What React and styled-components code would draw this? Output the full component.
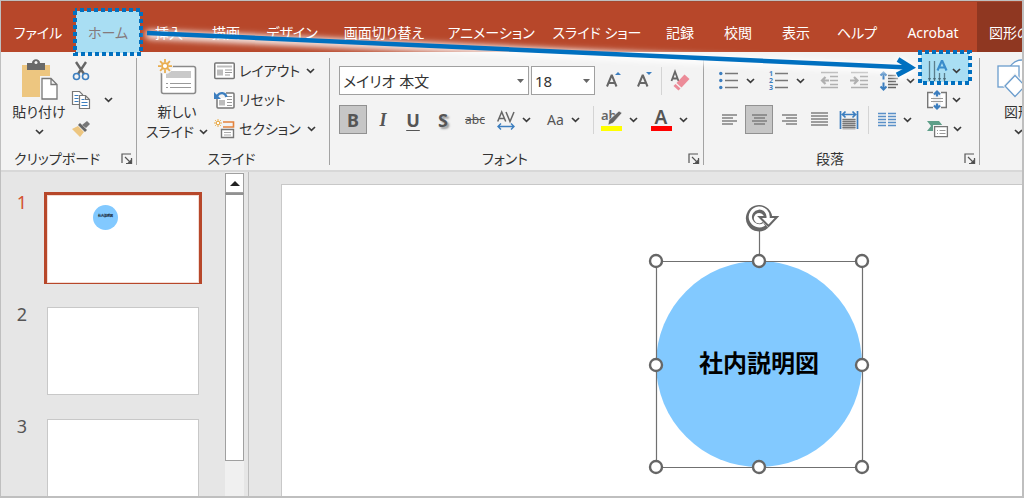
import React, { useState } from 'react';
import styled, { createGlobalStyle } from 'styled-components';

const GlobalStyle = createGlobalStyle`
  * {
    box-sizing: border-box;
  }
  body {
    margin: 0;
    font-family: 'Noto Sans', 'Noto Sans CJK JP', sans-serif;
    font-size: 14px;
    line-height: 20px;
    font-feature-settings: 'palt';
    color: #333;
  }
  button, select {
    font: inherit;
    font-feature-settings: inherit;
    color: inherit;
    border: 0;
    margin: 0;
    padding: 0;
    background: none;
  }
  svg {
    display: block;
    flex: none;
    overflow: visible;
  }
`;

/* ---------- frame ---------- */

const Frame = styled.div`
  position: relative;
  display: flex;
  flex-direction: column;
  height: 100vh;
  overflow: hidden;
  background: #e6e6e6;
  border: 1px solid #bfbfbf;
  border-right-width: 2px;
  border-bottom-width: 2px;
`;

const TabBar = styled.nav`
  display: flex;
  flex: none;
  height: 51px;
  background: #b7472a;
  border-top: 1px solid #a5482f;
`;

const Tab = styled.button`
  position: relative;
  flex: none;
  width: ${(p) => p.$width}px;
  padding-top: 12px;
  font-size: 14px;
  white-space: nowrap;
  color: ${(p) => (p.$active ? '#857a7c' : '#fff')};
`;

const ContextTab = styled.button`
  flex: 1 0 0;
  min-width: 0;
  padding: 12px 0 0 12px;
  overflow: hidden;
  font-size: 14px;
  text-align: left;
  white-space: nowrap;
  color: #fff;
  background: #8f3721;
`;

const TabText = styled.span`
  position: relative;
`;

const Marker = styled.svg`
  position: absolute;
  left: 50%;
  bottom: ${(p) => p.$bottom}px;
  transform: translateX(-50%);
`;

const ArrowLayer = styled.svg`
  position: absolute;
  top: 0;
  left: 0;
  pointer-events: none;
  filter: drop-shadow(0 2px 3px #fff) drop-shadow(0 0 3px rgba(255, 255, 255, 0.8));
`;

/* ---------- ribbon ---------- */

const Ribbon = styled.div`
  display: flex;
  flex: none;
  height: 120px;
  background: #f3f3f3;
  border-bottom: 2px solid #d8d8d8;
`;

const Group = styled.section`
  position: relative;
  display: flex;
  flex-direction: column;
  flex: ${(p) => (p.$width ? 'none' : '1 0 0')};
  width: ${(p) => (p.$width ? p.$width + 'px' : 'auto')};
  min-width: 0;

  &:not(:last-child)::after {
    content: '';
    position: absolute;
    top: 6px;
    right: 0;
    bottom: 5px;
    width: 1px;
    background: #a3a3a3;
  }
`;

const GroupBody = styled.div`
  display: flex;
  height: 96px;
  padding: 4px 0 0 ${(p) => p.$left || 8}px;
`;

const GroupFooter = styled.div`
  display: flex;
  align-items: center;
  height: 22px;
  padding-right: 4px;
`;

const GroupName = styled.span`
  flex: 1;
  padding-right: ${(p) => (p.$launcher ? 8 : 0)}px;
  text-align: center;
`;

const Launcher = styled.button`
  width: 12px;
  height: 12px;
`;

const BigButton = styled.button`
  display: flex;
  flex-direction: column;
  align-items: center;
  flex: none;
  width: 60px;
  padding-top: 2px;
  white-space: nowrap;

  & > svg {
    height: 44px;
  }
`;

const BigLine = styled.span`
  display: flex;
  align-items: center;
  justify-content: center;
  gap: 5px;
  height: 20px;
`;

const Stack = styled.div`
  display: flex;
  flex-direction: column;
  padding-left: ${(p) => p.$left || 0}px;
`;

const StackButton = styled.button`
  display: flex;
  align-items: center;
  gap: 4px;
  height: 29px;
  padding: 0 3px;
  white-space: nowrap;

  & > * + svg {
    margin-left: 2px;
  }
`;

const MenuButton = styled(StackButton)`
  position: relative;
  padding: 0 8px;
`;

const Over = styled.span`
  position: relative;
  display: flex;
  align-items: center;
  gap: 5px;
`;

const Rows = styled.div`
  display: flex;
  flex-direction: column;
  gap: 10px;
  padding-top: 10px;
  width: ${(p) => p.$width || 'auto'};
`;

const Row = styled.div`
  display: flex;
  align-items: center;
  gap: ${(p) => p.$gap || 2}px;
  height: 29px;
`;

const Tool = styled.button`
  display: flex;
  align-items: center;
  justify-content: center;
  flex: none;
  width: ${(p) => p.$width || 28}px;
  height: 29px;
  background: ${(p) => (p.$on ? '#c6c6c6' : 'transparent')};
  border: 1px solid ${(p) => (p.$on ? '#919191' : 'transparent')};
`;

const DropTool = styled.button`
  display: flex;
  align-items: center;
  gap: 7px;
  flex: none;
  width: ${(p) => p.$width || 48}px;
  height: 29px;
  padding-left: 4px;
`;

const Divider = styled.span`
  width: 1px;
  height: 28px;
  margin: 0 ${(p) => p.$space || 0}px;
  background: #d4d4d4;
`;

const Glyph = styled.span`
  font-size: 18px;
  font-weight: ${(p) => (p.$bold ? 700 : 400)};
  font-style: ${(p) => (p.$italic ? 'italic' : 'normal')};
  font-family: ${(p) => (p.$italic ? "'Liberation Serif', serif" : 'inherit')};
  text-decoration: ${(p) => (p.$underline ? 'underline' : 'none')};
  text-underline-offset: 3px;
  text-shadow: ${(p) => (p.$shadow ? '2px 2px 2px #999' : 'none')};
  color: #555;
`;

const SmallGlyph = styled.span`
  font-size: ${(p) => p.$size || 14}px;
  text-decoration: ${(p) => (p.$strike ? 'line-through' : 'none')};
  color: #555;
`;

const SelectBox = styled.span`
  position: relative;
  width: ${(p) => p.$width}px;
  height: 29px;

  select {
    width: 100%;
    height: 100%;
    padding: 0 20px 0 3px;
    font-size: 15px;
    appearance: none;
    background: #fff;
    border: 1px solid #a0a0a0;
  }
  svg {
    position: absolute;
    top: 13px;
    right: 5px;
    pointer-events: none;
  }
`;

/* ---------- workspace ---------- */

const Workspace = styled.div`
  display: flex;
  flex: 1;
  min-height: 0;
`;

const SlideList = styled.ol`
  display: flex;
  flex-direction: column;
  gap: 20px;
  flex: none;
  width: 224px;
  margin: 0;
  padding: 20px 0 0 13px;
  overflow: hidden;
  list-style: none;
`;

const SlideItem = styled.li`
  display: flex;
  align-items: flex-start;
  gap: 14px;
  flex: none;
`;

const SlideNumber = styled.span`
  width: 16px;
  font-size: 18px;
  text-align: center;
  color: ${(p) => (p.$current ? '#d35230' : '#555')};
`;

const Thumb = styled.button`
  position: relative;
  width: 158px;
  height: 92px;
  padding: ${(p) => (p.$current ? 0 : 3)}px;
  border: ${(p) => (p.$current ? '3px solid #b7472a' : '0')};

  &::before {
    content: '';
    display: block;
    height: 100%;
    background: #fff;
    border: 1px solid ${(p) => (p.$current ? '#f3dcd5' : '#c8c8c8')};
  }
`;

const ThumbShape = styled.span`
  position: absolute;
  top: 10px;
  left: 46px;
  width: 25px;
  height: 25px;
  border-radius: 50%;
  font-size: 3px;
  font-weight: 700;
  line-height: 22px;
  text-align: center;
  color: #000;
  background: #82c9ff;
`;

const ScrollBar = styled.div`
  display: flex;
  flex-direction: column;
  flex: none;
  width: 19px;
  padding-top: 1px;
  background: #f0f0f0;
`;

const ScrollUp = styled.button`
  display: flex;
  align-items: center;
  justify-content: center;
  height: 20px;
  background: #fff;
  border: 1px solid #a0a0a0;
`;

const ScrollThumb = styled.div`
  flex: 0 0 83%;
  background: #fff;
  border: 1px solid #a0a0a0;
  border-top: 2px solid #919191;
`;

const Stage = styled.main`
  flex: 1;
  display: flex;
  min-width: 0;
  margin-left: 4px;
  padding: 12px 0 0 32px;
  border-left: 1px solid #bdbdbd;
`;

const Slide = styled.div`
  position: relative;
  flex: 1;
  background: #fff;
  border: 1px solid #c8c8c8;
  border-right: 0;
  border-bottom: 0;
`;

const Shape = styled.div`
  position: absolute;
  top: 76px;
  left: 374px;
  display: flex;
  align-items: center;
  justify-content: center;
  width: 206px;
  height: 206px;
  padding-bottom: 4px;
  border-radius: 50%;
  font-size: 24px;
  font-weight: 700;
  font-family: 'Noto Sans CJK JP', sans-serif;
  font-feature-settings: normal;
  color: #000;
  background: #82c9ff;
`;

const Selection = styled.svg`
  position: absolute;
  top: -57px;
  left: -8px;
`;

/* ---------- icons ---------- */

const G = '#777';
const B = '#3c7ebf';

const Chevron = () => (
  <svg width="9" height="6" viewBox="0 0 9 6" fill="none" stroke="#3b3b3b" strokeWidth="1.7">
    <path d="M1 1l3.5 3.3L8 1" />
  </svg>
);

const Caret = () => (
  <svg width="7" height="4" viewBox="0 0 7 4">
    <path d="M0 0h7L3.500 4z" fill="#666" />
  </svg>
);

const LauncherIcon = () => (
  <svg width="12" height="12" viewBox="0 0 12 12" fill="none" stroke="#555" strokeWidth="1.2">
    <path d="M1 10V1h9M4 4l6 6M10.500 5v5.500H5" />
    <path d="M7 10.500h3.500V7z" fill="#444" />
  </svg>
);

const PasteIcon = () => (
  <svg width="38" height="44" viewBox="0 0 38 44">
    <rect x="2" y="7" width="28" height="32" fill="#edc680" />
    <path d="M7 5h5c0-5 8-5 8 0h5v7H7z" fill="#696969" />
    <circle cx="16" cy="4.500" r="1.500" fill="#f3f3f3" />
    <path d="M20 18h12l7 7v17H20z" fill="#f3f3f3" />
    <path d="M22 20.500h9l6 6V41H22zM31 20.500v6h6" fill="#fff" stroke={G} strokeWidth="1.3" />
  </svg>
);

const CutIcon = () => (
  <svg width="18" height="20" viewBox="0 0 18 20" fill="none">
    <path d="M4 1l8 12M14 1L6 13" stroke="#666" strokeWidth="2.400" />
    <circle cx="4.500" cy="15.500" r="3" stroke={B} strokeWidth="1.600" />
    <circle cx="13.500" cy="15.500" r="3" stroke={B} strokeWidth="1.600" />
  </svg>
);

const CopyIcon = () => (
  <svg width="18" height="20" viewBox="0 0 18 20" fill="#fff" stroke={G} strokeWidth="1.200">
    <path d="M.500 1.500h7l3 3v10h-10z" />
    <path d="M2.500 5.500h4M2.500 8.500h4M2.500 11.500h4" stroke={B} />
    <path d="M7.500 5.500h6l4 4v9h-10zM13.500 5.500v4h4" />
    <path d="M9.500 9.500h3M9.500 12.500h6M9.500 15.500h6" stroke={B} />
  </svg>
);

const BrushIcon = () => (
  <svg width="18" height="18" viewBox="0 0 18 18">
    <path d="M0 9l6-3 6 6-4 5z" fill="#edc680" />
    <path d="M6 5l2-2 7 7-2 2z" fill="#666" />
    <path d="M10 5l5-4 3 3-4 4z" fill="#777" />
  </svg>
);

const Spark = ({ x, y, r }) => (
  <g transform={`translate(${x} ${y}) scale(${r})`} stroke="#e9ad4e" strokeWidth="0.250" fill="none">
    <circle r="0.420" fill="#fff" />
    <path d="M0-.500V-1M0 .500V1M-.500 0H-1M.500 0H1M-.350-.350l-.350-.350M.350-.350l.350-.350M-.350 .350l-.350 .350M.350 .350l.350 .350" />
  </g>
);

const NewSlideIcon = () => (
  <svg width="40" height="44" viewBox="0 0 40 44">
    <rect x="4.500" y="8.500" width="34" height="27" rx="2" fill="#fff" stroke="#8a8a8a" strokeWidth="1.600" />
    <path d="M9 13h25v7H9z" fill="#c9c9c9" />
    <path d="M9 25.500h2M13 25.500h21M9 29.500h2M13 29.500h21" stroke="#999" />
    <circle cx="8" cy="8" r="8" fill="#f3f3f3" />
    <Spark x={8} y={8} r={7} />
  </svg>
);

const LayoutIcon = () => (
  <svg width="21" height="18" viewBox="0 0 21 18">
    <rect x=".750" y="1" width="19.500" height="15.500" rx="1" fill="#fff" stroke={G} strokeWidth="1.500" />
    <path d="M3 3.500h15v2H3zM3 7.500h6v6H3z" fill="#bdbdbd" />
    <path d="M11 8h7M11 10.500h7M11 13h5" stroke="#999" />
  </svg>
);

const ResetIcon = () => (
  <svg width="21" height="18" viewBox="0 0 21 18">
    <rect x="3" y="2" width="17" height="15" rx="1" fill="#fff" stroke={G} strokeWidth="1.500" />
    <path d="M5 9h6v5.500H5z" fill="#bdbdbd" />
    <path d="M13 5.500h5M13 8.500h5M13 11.500h5M13 14.500h5" stroke="#999" />
    <path d="M0 0h12v7H0z" fill="#f3f3f3" />
    <path d="M12.500 6C11 1 6 1 3 5" stroke={B} strokeWidth="2.400" fill="none" />
    <path d="M0 1v7h7z" fill={B} />
  </svg>
);

const SectionIcon = () => (
  <svg width="21" height="20" viewBox="0 0 21 20" fill="none">
    <path d="M9 3h10.500v5H9" stroke="#e3833d" strokeWidth="1.600" />
    <path d="M7.500 10.500h12v8h-12z" fill="#fff" stroke={G} strokeWidth="1.400" />
    <path d="M10 13.500h7M10 16h7" stroke="#aaa" />
    <Spark x={4} y={4} r={4} />
  </svg>
);

const SizeIcon = ({ down }) => (
  <svg width="20" height="22" viewBox="0 0 20 22" fill="none">
    <path d="M5 16.500L9.500 5.500h.500L14.500 16.500M6.500 13h7" stroke="#666" strokeWidth="2" />
    <path d={down ? 'M13 2h6l-3 3z' : 'M13 5h6l-3-3z'} fill={B} />
  </svg>
);

const ClearIcon = () => (
  <svg width="20" height="22" viewBox="0 0 20 22" fill="none">
    <path d="M1.500 11L5 1.500 8.500 11M2.500 8.500h5" stroke="#666" strokeWidth="1.800" />
    <path d="M14.500 4.500l5 4.500-8 8.500-5-4.500z" fill="#ec8b98" />
    <path d="M5.500 14l5 4.500-2 2-5-4.500z" fill="#ec8b98" />
  </svg>
);

const SpacingIcon = () => (
  <svg width="18" height="20" viewBox="0 0 18 20" fill="none">
    <path d="M.700 11.500L4.700 2l4 9.500M2.200 8.500h5" stroke="#666" strokeWidth="1.500" />
    <path d="M9 2l4 9.500L17 2" stroke="#666" strokeWidth="1.500" />
    <path d="M1 16.500h16M4 13.500l-3 3 3 3M14 13.500l3 3-3 3" stroke={B} strokeWidth="1.400" />
  </svg>
);

const HighlightText = styled.text`
  font-size: 13px;
  font-weight: 600;
  fill: #666;
`;

const ColorLetter = styled.text`
  font-size: 19px;
  font-weight: 600;
  text-anchor: middle;
  fill: #555;
`;

const HighlightIcon = () => (
  <svg width="22" height="22" viewBox="0 0 22 22">
    <HighlightText x="1" y="11">ab</HighlightText>
    <path d="M19 2l3 2-9 10-5 2 1-5z" fill="#666" stroke="#f3f3f3" strokeWidth=".600" />
    <path d="M1 17h21v5H1z" fill="#ff0" />
  </svg>
);

const FontColorIcon = () => (
  <svg width="22" height="22" viewBox="0 0 22 22">
    <ColorLetter x="11" y="15">A</ColorLetter>
    <path d="M1 17h21v5H1z" fill="#f00" />
  </svg>
);

const BulletsIcon = () => (
  <svg width="20" height="20" viewBox="0 0 20 20">
    <path d="M6 2.500h13M6 9.500h13M6 16.500h13" stroke={G} strokeWidth="1.400" />
    {[2.5, 9.5, 16.5].map((y) => <circle key={y} cx="1.800" cy={y} r="1.700" fill={B} />)}
  </svg>
);

const NumberText = styled.text`
  font-size: 7px;
  font-weight: 700;
  fill: #3c7ebf;
`;

const NumberingIcon = () => (
  <svg width="20" height="20" viewBox="0 0 20 20">
    <path d="M6 2.500h13M6 9.500h13M6 16.500h13" stroke={G} strokeWidth="1.400" />
    {[1, 2, 3].map((n) => <NumberText key={n} x="0" y={n * 7 - 2}>{n}</NumberText>)}
  </svg>
);

const IndentIcon = ({ out }) => (
  <svg width="19" height="18" viewBox="0 0 19 18" fill="none" stroke="#b0b0b0" strokeWidth="1.300">
    <path d="M1 .500h17M10 4.500h8M10 8.500h8M10 12.500h8M1 15.500h17" />
    <path d={out ? 'M9 8.500H2M5.500 5L2 8.500 5.500 12' : 'M0 8.500h7M4 5l3.500 3.500L4 12'} strokeWidth="2.200" />
  </svg>
);

const LineSpacingIcon = () => (
  <svg width="20" height="20" viewBox="0 0 20 20" fill="none">
    <path d="M9 4.500h8M9 7.500h10M9 10.500h8M9 13.500h10M9 16.500h8" stroke="#666" strokeWidth="1.300" />
    <path d="M4.500 1.500v7M4.500 11.500v7M1.500 4.500l3-3 3 3M1.500 15.500l3 3 3-3" stroke={B} strokeWidth="2" />
  </svg>
);

const AlignIcon = ({ kind }) => {
  const justify = kind === 'justify';
  const widths = justify ? [17, 17, 17, 17, 17] : [15, 11, 15, 11];
  return (
    <svg width="17" height="15" viewBox="0 0 17 15">
      {widths.map((w, i) => {
        let start = 1;
        if (justify) start = 0;
        if (kind === 'right') start = 16 - w;
        if (kind === 'center') start = (17 - w) / 2;
        return <path key={i} d={`M${start} ${i * 3 + (justify ? 1 : 3)}h${w}`} stroke={G} strokeWidth="1.400" />;
      })}
    </svg>
  );
};

const DistributeIcon = () => (
  <svg width="20" height="20" viewBox="0 0 20 20" fill="none">
    <path d="M1.500 1v18M18.500 1v18M4 4.500h12M6.500 1.500l-3 3 3 3M13.500 1.500l3 3-3 3" stroke={B} strokeWidth="1.700" />
    <path d="M3.500 8.500h13v11h-13z" fill="#b5b5b5" />
    <path d="M3.500 9.500h13M3.500 11.500h13M3.500 13.500h13M3.500 15.500h13M3.500 17.500h13" stroke="#777" strokeWidth="1.200" />
  </svg>
);

const ColumnsIcon = () => (
  <svg width="18" height="16" viewBox="0 0 18 16" stroke="#5a90c8" strokeWidth="1.600">
    <path d="M0 1.500h8M0 4.500h8M0 7.500h8M0 10.500h8M0 13.500h8M10 1.500h8M10 4.500h8M10 7.500h8M10 10.500h8M10 13.500h8" />
  </svg>
);

const TextDirectionIcon = () => (
  <svg width="20" height="22" viewBox="0 0 20 22" fill="none">
    <path d="M2.500 1v20M7.500 1v20M12.500 13v8M17.500 13v8" stroke="#5b7d8c" strokeWidth="1.300" />
    <path d="M1 18h3l-1.500 3zM6 18h3l-1.500 3zM11 18h3l-1.500 3zM16 18h3l-1.500 3z" fill="#4b6a78" />
    <path d="M10.500 10.500L14.700 1h.600l4.200 9.500M12 7.500h6" stroke="#3a8ccb" strokeWidth="2.200" />
  </svg>
);

const AlignTextIcon = () => (
  <svg width="20" height="20" viewBox="0 0 20 20" fill="none">
    <path d="M6 2.500H.700v15H6M14 2.500h5.300v15H14" fill="#fff" stroke={G} strokeWidth="1.400" />
    <path d="M4 8.500h12M4 11.500h12" stroke="#999" />
    <path d="M10 6.500V2M7 4.500L10 1.500l3 3M10 13.500v5M7 15.500l3 3 3-3" stroke={B} strokeWidth="2.200" />
  </svg>
);

const SmartArtIcon = () => (
  <svg width="21" height="18" viewBox="0 0 21 18" fill="none">
    <path d="M0 1h12l4 5-4 5H0l4-5z" fill="#5e9f89" />
    <path d="M6 5h15v13H6z" fill="#f3f3f3" />
    <path d="M7.600 6.600h12.800v10H7.600z" fill="#fff" stroke={G} strokeWidth="1.300" />
    <path d="M10 10.500h1M12.500 10.500h6M10 13.500h1M12.500 13.500h6" stroke="#999" />
  </svg>
);

const ShapesIcon = () => (
  <svg width="42" height="44" viewBox="0 0 42 44" fill="#fff" stroke="#6b9dcd" strokeWidth="1.300">
    <circle cx="25" cy="16" r="14" />
    <rect x="1" y="8" width="21" height="21" />
    <path d="M18 17L8 28l10 11 11-11z" stroke="#f3f3f3" strokeWidth="3" />
    <path d="M18 17.500L8 28l10 10.500L28 28z" />
  </svg>
);

const RibbonArrow = () => (
  <ArrowLayer width="1022" height="110" viewBox="0 0 1022 110" fill="none" stroke="#0070c0">
    <path d="M146 32L908 66.500" strokeWidth="4.500" />
    <path d="M897 58.500L910 66.500 896 74" strokeWidth="5" />
  </ArrowLayer>
);

const Callout = ({ width, height, bottom }) => (
  <Marker width={width} height={height} $bottom={bottom} aria-hidden="true">
    <rect x="3" y="3" width={width - 6} height={height - 6} fill="#a9def3" />
    <rect
      x="2"
      y="2"
      width={width - 4}
      height={height - 4}
      fill="none"
      stroke="#0070c0"
      strokeWidth="4"
      strokeDasharray="4 3"
      strokeDashoffset="2"
    />
  </Marker>
);

const handles = [
  [8, 57], [111, 57], [214, 57],
  [8, 161], [214, 161],
  [8, 263], [111, 263], [214, 263],
];

const SelectionFrame = () => (
  <Selection width="222" height="271" viewBox="0 0 222 271" fill="none">
    <path d="M8.500 57.500h206v206h-206zM111.500 24v33" stroke="#707070" strokeWidth="1.200" />
    {handles.map(([x, y]) => (
      <circle key={`${x}-${y}`} cx={x} cy={y} r="6" fill="#fff" stroke="#666" strokeWidth="2.400" />
    ))}
    <circle cx="111" cy="14" r="12" fill="#fff" />
    <path d="M117.500 20.800A9.200 9.200 0 1 1 120.200 13" stroke="#666" strokeWidth="8" />
    <path d="M111.500 13h17.500L120.500 22z" fill="#fff" stroke="#666" strokeWidth="2" />
    <path d="M116.200 20.300A8.900 8.900 0 1 1 120 14.500" stroke="#fff" strokeWidth="3.200" />
  </Selection>
);

/* ---------- data ---------- */

const tabs = [
  { label: 'ファイル', width: 74 },
  { label: 'ホーム', width: 66, active: true },
  { label: '挿入', width: 56 },
  { label: '描画', width: 58 },
  { label: 'デザイン', width: 74 },
  { label: '画面切り替え', width: 110 },
  { label: 'アニメーション', width: 104 },
  { label: 'スライド ショー', width: 108 },
  { label: '記録', width: 58 },
  { label: '校閲', width: 58 },
  { label: '表示', width: 58 },
  { label: 'ヘルプ', width: 64 },
  { label: 'Acrobat', width: 88 },
];

const RibbonGroup = ({ name, width, left, launcher, children }) => (
  <Group $width={width} aria-label={name}>
    <GroupBody $left={left}>{children}</GroupBody>
    <GroupFooter>
      <GroupName $launcher={launcher}>{name}</GroupName>
      {launcher && <Launcher aria-label={`${name}の設定`}><LauncherIcon /></Launcher>}
    </GroupFooter>
  </Group>
);

const App = () => {
  const [current, setCurrent] = useState(1);

  return (
    <>
      <GlobalStyle />
      <Frame lang="ja">
        <TabBar>
          {tabs.map((tab) => (
            <Tab key={tab.label} $width={tab.width} $active={tab.active}>
              {tab.active && <Callout width={70} height={48} bottom={-4} />}
              <TabText>{tab.label}</TabText>
            </Tab>
          ))}
          <ContextTab>図形の書式</ContextTab>
        </TabBar>

        <Ribbon>
          <RibbonGroup name="クリップボード" width={136} launcher>
            <BigButton>
              <PasteIcon />
              <BigLine>貼り付け</BigLine>
              <BigLine><Chevron /></BigLine>
            </BigButton>
            <Stack>
              <StackButton aria-label="切り取り"><CutIcon /></StackButton>
              <Row $gap={8}>
                <StackButton aria-label="コピー"><CopyIcon /></StackButton>
                <StackButton aria-label="コピーのオプション"><Chevron /></StackButton>
              </Row>
              <StackButton aria-label="書式のコピー"><BrushIcon /></StackButton>
            </Stack>
          </RibbonGroup>

          <RibbonGroup name="スライド" width={193} left={10}>
            <BigButton>
              <NewSlideIcon />
              <BigLine>新しい</BigLine>
              <BigLine>スライド<Chevron /></BigLine>
            </BigButton>
            <Stack $left={4}>
              <StackButton><LayoutIcon /><span>レイアウト</span><Chevron /></StackButton>
              <StackButton><ResetIcon /><span>リセット</span></StackButton>
              <StackButton><SectionIcon /><span>セクション</span><Chevron /></StackButton>
            </Stack>
          </RibbonGroup>

          <RibbonGroup name="フォント" width={374} left={9} launcher>
            <Rows>
              <Row>
                <SelectBox $width={190}>
                  <select aria-label="フォント"><option>メイリオ 本文</option></select>
                  <Caret />
                </SelectBox>
                <SelectBox $width={64}>
                  <select aria-label="フォント サイズ"><option>18</option></select>
                  <Caret />
                </SelectBox>
                <Tool $width={30} aria-label="拡大"><SizeIcon /></Tool>
                <Tool aria-label="縮小"><SizeIcon down /></Tool>
                <Divider $space={2} />
                <Tool aria-label="書式のクリア"><ClearIcon /></Tool>
              </Row>
              <Row>
                <Tool $on aria-label="太字"><Glyph $bold>B</Glyph></Tool>
                <Tool aria-label="斜体"><Glyph $bold $italic>I</Glyph></Tool>
                <Tool aria-label="下線"><Glyph $bold $underline>U</Glyph></Tool>
                <Tool aria-label="影"><Glyph $bold $shadow>S</Glyph></Tool>
                <Tool $width={32} aria-label="取り消し線"><SmallGlyph $size={12} $strike>abc</SmallGlyph></Tool>
                <DropTool aria-label="文字の間隔"><SpacingIcon /><Chevron /></DropTool>
                <DropTool aria-label="文字種の変換"><SmallGlyph>Aa</SmallGlyph><Chevron /></DropTool>
                <Divider />
                <DropTool aria-label="蛍光ペンの色"><HighlightIcon /><Chevron /></DropTool>
                <DropTool aria-label="フォントの色"><FontColorIcon /><Chevron /></DropTool>
              </Row>
            </Rows>
          </RibbonGroup>

          <RibbonGroup name="段落" width={276} left={11} launcher>
            <Rows $width="204px">
              <Row>
                <DropTool aria-label="箇条書き"><BulletsIcon /><Chevron /></DropTool>
                <DropTool aria-label="段落番号"><NumberingIcon /><Chevron /></DropTool>
                <Tool aria-label="インデントを減らす"><IndentIcon out /></Tool>
                <Tool aria-label="インデントを増やす"><IndentIcon /></Tool>
                <DropTool $width={44} aria-label="行間"><LineSpacingIcon /><Chevron /></DropTool>
              </Row>
              <Row>
                <Tool aria-label="左揃え"><AlignIcon kind="left" /></Tool>
                <Tool $on aria-label="中央揃え"><AlignIcon kind="center" /></Tool>
                <Tool aria-label="右揃え"><AlignIcon kind="right" /></Tool>
                <Tool aria-label="両端揃え"><AlignIcon kind="justify" /></Tool>
                <Tool aria-label="均等割り付け"><DistributeIcon /></Tool>
                <Divider $space={3} />
                <DropTool $width={44} aria-label="段の追加"><ColumnsIcon /><Chevron /></DropTool>
              </Row>
            </Rows>
            <Stack>
              <MenuButton aria-label="文字列の方向">
                <Callout width={54} height={35} bottom={0} />
                <Over><TextDirectionIcon /><Chevron /></Over>
              </MenuButton>
              <MenuButton aria-label="文字の配置"><Over><AlignTextIcon /><Chevron /></Over></MenuButton>
              <MenuButton aria-label="SmartArt に変換"><Over><SmartArtIcon /><Chevron /></Over></MenuButton>
            </Stack>
          </RibbonGroup>

          <Group>
            <GroupBody $left={8}>
              <BigButton>
                <ShapesIcon />
                <BigLine>図形</BigLine>
                <BigLine><Chevron /></BigLine>
              </BigButton>
            </GroupBody>
          </Group>
        </Ribbon>

        <Workspace>
          <SlideList>
            {[1, 2, 3].map((n) => (
              <SlideItem key={n}>
                <SlideNumber $current={n === current}>{n}</SlideNumber>
                <Thumb $current={n === current} onClick={() => setCurrent(n)} aria-label={`スライド ${n}`}>
                  {n === 1 && <ThumbShape>社内説明図</ThumbShape>}
                </Thumb>
              </SlideItem>
            ))}
          </SlideList>
          <ScrollBar>
            <ScrollUp aria-label="上へ">
              <svg width="10" height="5" viewBox="0 0 10 5"><path d="M0 5l5-5 5 5z" fill="#222" /></svg>
            </ScrollUp>
            <ScrollThumb />
          </ScrollBar>
          <Stage>
            <Slide>
              <Shape>
                社内説明図
                <SelectionFrame />
              </Shape>
            </Slide>
          </Stage>
        </Workspace>

        <RibbonArrow />
      </Frame>
    </>
  );
};

export default App;
